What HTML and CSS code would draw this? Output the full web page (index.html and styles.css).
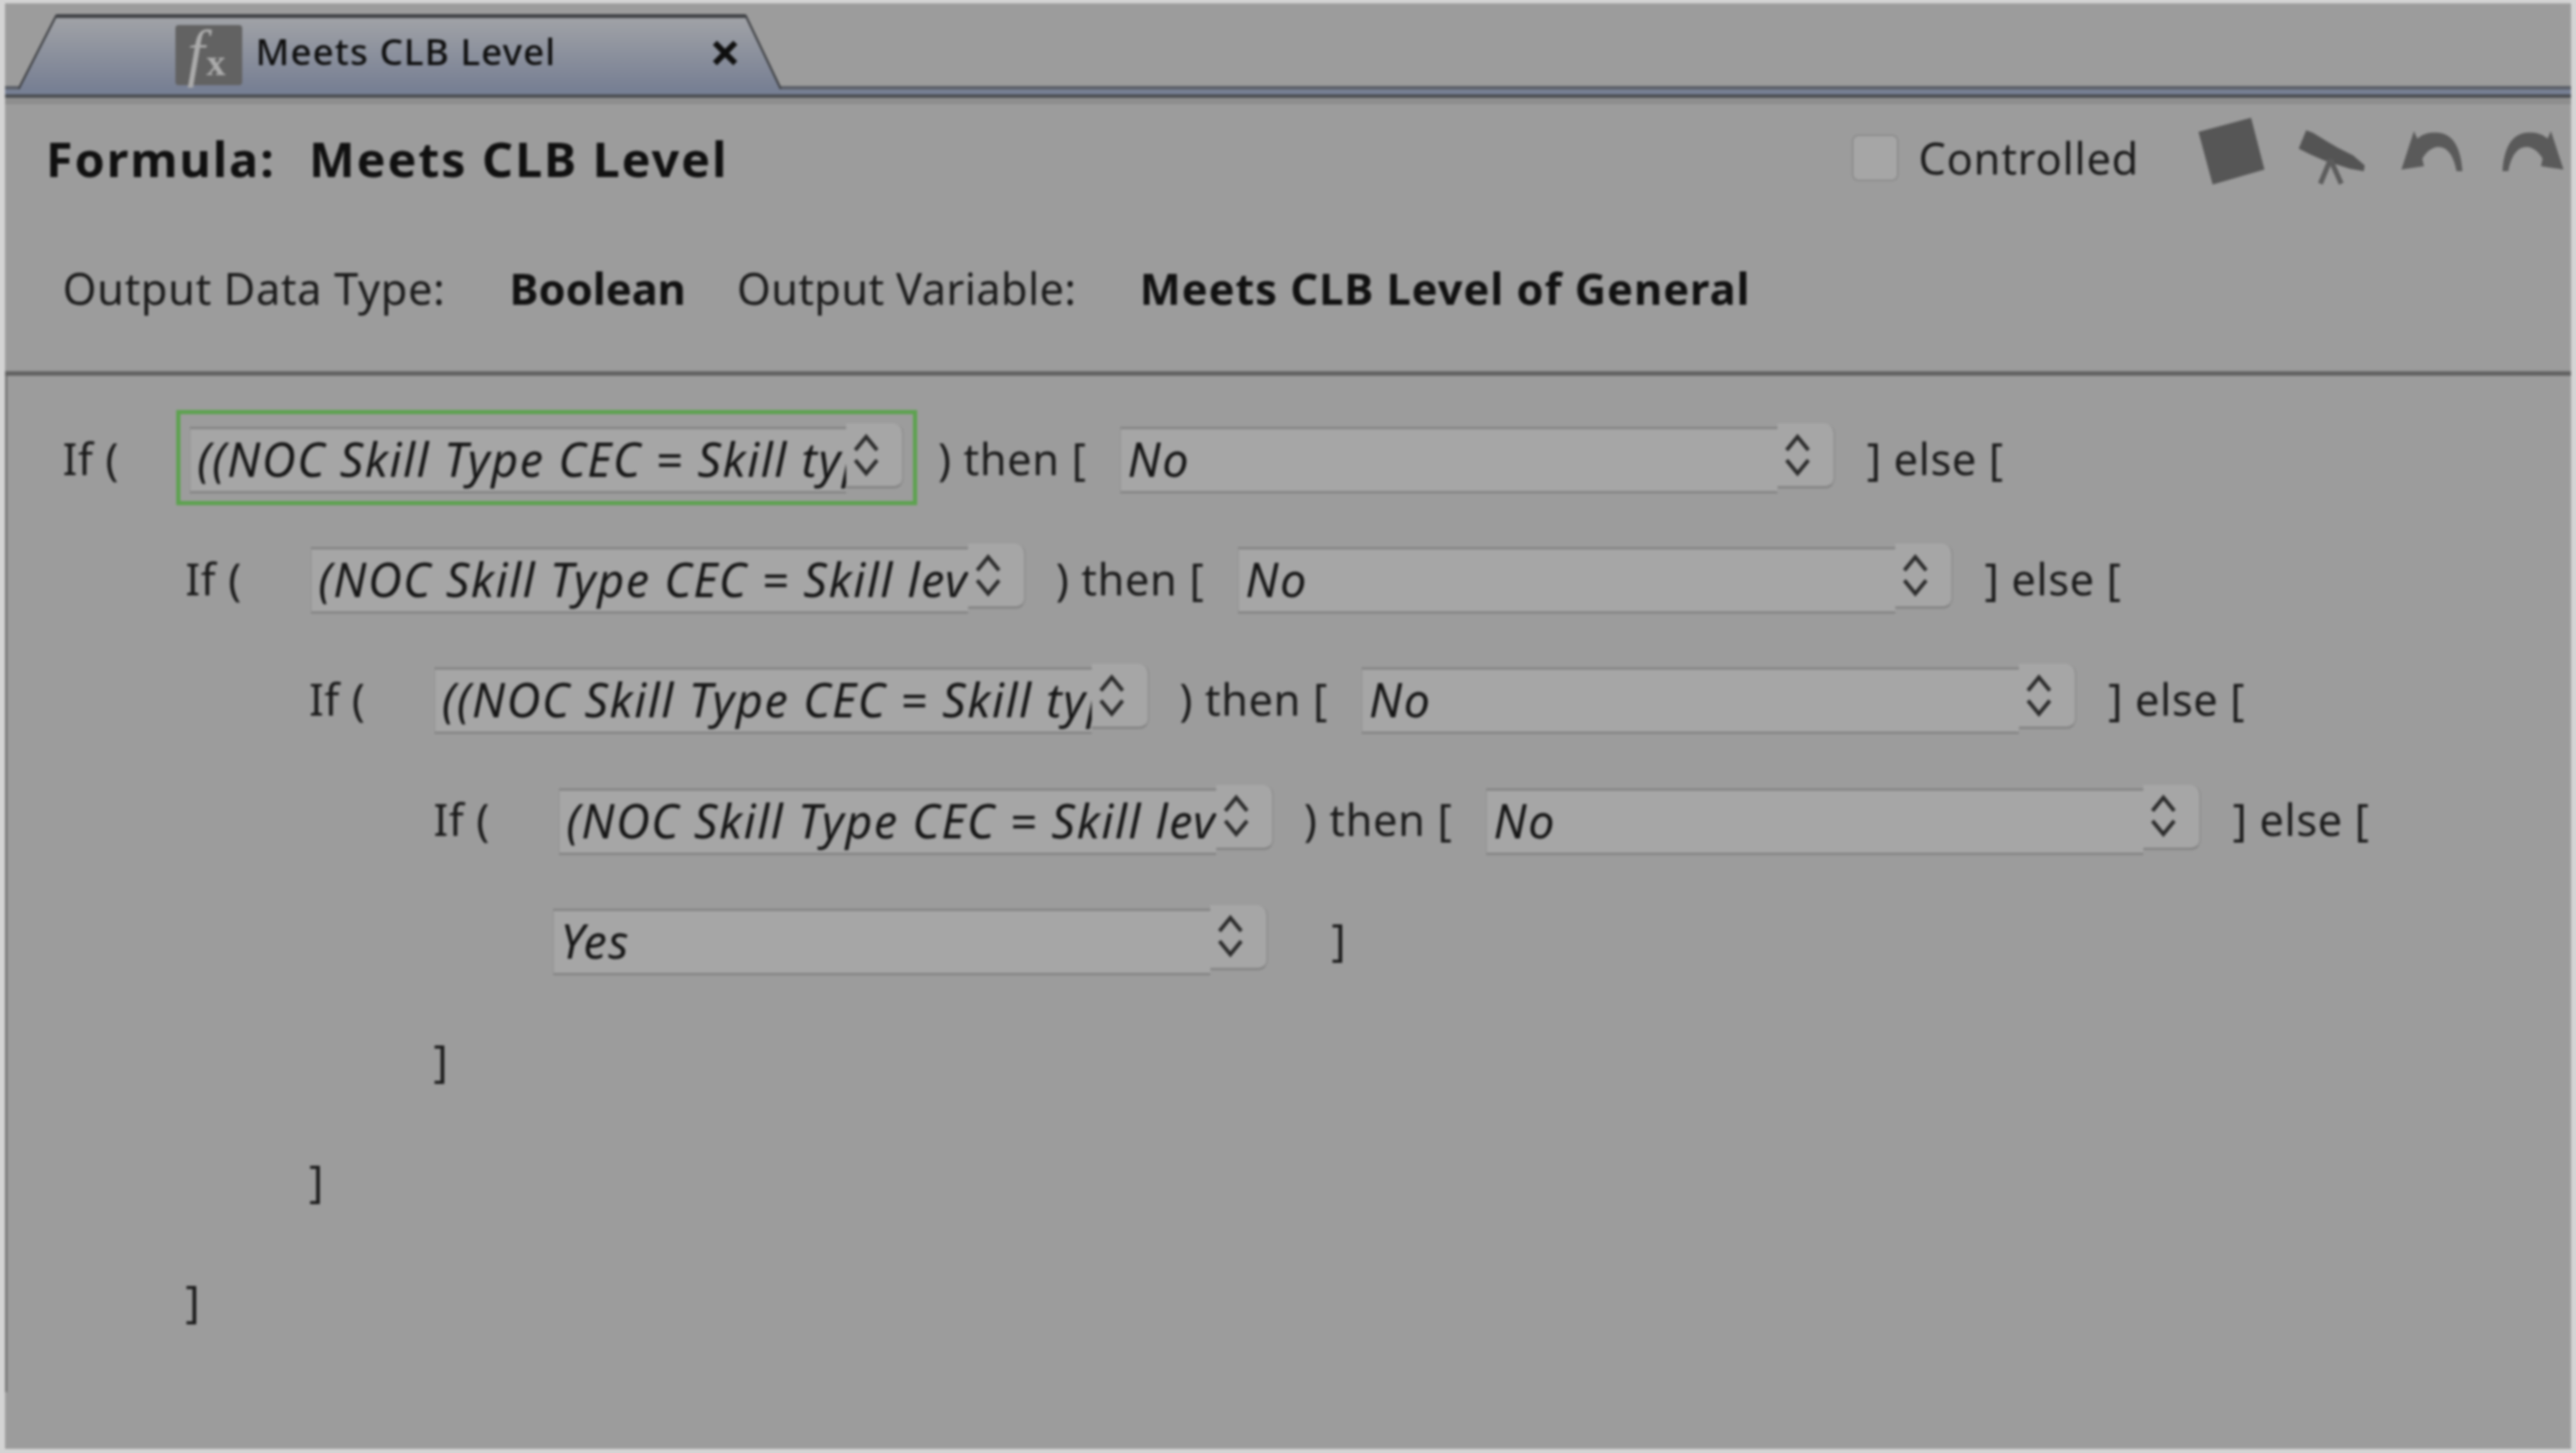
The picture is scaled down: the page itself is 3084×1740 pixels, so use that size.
FILE: index.html
```html
<!DOCTYPE html>
<html lang="en">
<head>
<meta charset="utf-8">
<title>Meets CLB Level</title>
<link rel="stylesheet" href="styles.css">
</head>
<body>
<svg class="defs" width="0" height="0" aria-hidden="true">
  <symbol id="updown" viewBox="0 0 32 52">
    <path d="M3 20 L16 4 L29 20 M3 32 L16 48 L29 32" fill="none" stroke="#2c2c2c" stroke-width="4.5"/>
  </symbol>
</svg>
<main class="window">
  <div class="tabs">
    <div class="tab-gap tab-gap-left"></div>
    <div class="tab">
      <svg class="tab-shape" viewBox="0 0 910 90" preserveAspectRatio="none" aria-hidden="true">
        <defs>
          <linearGradient id="tabfill" x1="0" y1="0" x2="0" y2="1">
            <stop offset="0" stop-color="#a1a3a7"/>
            <stop offset="1" stop-color="#777f93"/>
          </linearGradient>
        </defs>
        <polygon points="0,90 45,2 868,2 910,90" fill="url(#tabfill)"/>
        <polyline points="0,90 45,2 868,2 910,90" fill="none" stroke="#3e4044" stroke-width="2.5"/>
        <line x1="45" y1="2" x2="868" y2="2" stroke="#3e4044" stroke-width="5"/>
      </svg>
      <span class="fx"><i class="fx-f">f</i><span class="fx-x">x</span></span>
      <span class="tab-title">Meets CLB Level</span>
      <span class="tab-close">×</span>
    </div>
    <div class="tab-gap tab-gap-right"></div>
  </div>
  <div class="strip"></div>

  <header class="head">
    <h1 class="title"><span class="title-key">Formula:</span><span>Meets CLB Level</span></h1>
    <div class="tools">
      <span class="check"></span>
      <span class="check-label">Controlled</span>
      <div class="icons">
        <svg class="icon" viewBox="0 0 80 80" aria-hidden="true"><polygon points="0,17 63,0 79,62 17,80" fill="#565656"/></svg>
        <svg class="icon" viewBox="0 0 80 80" aria-hidden="true">
          <path d="M9 15 L0 37 L14 44 L30 51 L61 61 L78 64 L79 57 L65 45 L47 36 L35 29 L17 18 Z" fill="#545454"/>
          <path d="M38 50 L26 79 M38 50 L51 79" fill="none" stroke="#5c5c5c" stroke-width="6"/>
        </svg>
        <svg class="icon" viewBox="0 0 80 80" aria-hidden="true"><path d="M3 62 L18 16 L22 25 C30 18 40 17 48 18 C64 20 74 34 76 64 L69 64 C66 46 58 34 46 35 C38 36 32 42 28 49 L30 58 Z" fill="#5a5a5a"/></svg>
        <svg class="icon" viewBox="0 0 80 80" aria-hidden="true"><path d="M77 62 L62 16 L58 25 C50 18 40 17 32 18 C16 20 6 34 4 64 L11 64 C14 46 22 34 34 35 C42 36 48 42 52 49 L50 58 Z" fill="#5a5a5a"/></svg>
      </div>
    </div>
  </header>

  <div class="meta">
    <span class="meta-label">Output Data Type:</span>
    <b class="meta-type">Boolean</b>
    <span class="meta-var">Output Variable:</span>
    <b class="meta-name">Meets CLB Level of General</b>
  </div>
  <div class="rule"></div>

  <section class="formula">
    <div class="row lvl0">
      <span class="if">If (</span>
      <div class="combo cond focused"><span class="value">((NOC Skill Type CEC = Skill type</span><span class="spin"><svg class="updown"><use href="#updown"/></svg></span></div>
      <span class="then">) then [</span>
      <div class="combo result"><span class="value">No</span><span class="spin"><svg class="updown"><use href="#updown"/></svg></span></div>
      <span class="else">] else [</span>
    </div>
    <div class="row lvl1">
      <span class="if">If (</span>
      <div class="combo cond"><span class="value">(NOC Skill Type CEC = Skill level</span><span class="spin"><svg class="updown"><use href="#updown"/></svg></span></div>
      <span class="then">) then [</span>
      <div class="combo result"><span class="value">No</span><span class="spin"><svg class="updown"><use href="#updown"/></svg></span></div>
      <span class="else">] else [</span>
    </div>
    <div class="row lvl2">
      <span class="if">If (</span>
      <div class="combo cond"><span class="value">((NOC Skill Type CEC = Skill type</span><span class="spin"><svg class="updown"><use href="#updown"/></svg></span></div>
      <span class="then">) then [</span>
      <div class="combo result"><span class="value">No</span><span class="spin"><svg class="updown"><use href="#updown"/></svg></span></div>
      <span class="else">] else [</span>
    </div>
    <div class="row lvl3">
      <span class="if">If (</span>
      <div class="combo cond"><span class="value">(NOC Skill Type CEC = Skill level</span><span class="spin"><svg class="updown"><use href="#updown"/></svg></span></div>
      <span class="then">) then [</span>
      <div class="combo result"><span class="value">No</span><span class="spin"><svg class="updown"><use href="#updown"/></svg></span></div>
      <span class="else">] else [</span>
    </div>
    <div class="row lvl4">
      <div class="combo cond"><span class="value">Yes</span><span class="spin"><svg class="updown"><use href="#updown"/></svg></span></div>
      <span class="close-last">]</span>
    </div>
    <div class="row lvl3"><span>]</span></div>
    <div class="row lvl2"><span>]</span></div>
    <div class="row lvl1"><span>]</span></div>
  </section>
</main>
</body>
</html>
```
FILE: styles.css
```css
html, body {
  margin: 0;
  padding: 0;
  background: #d4d4d4;
}
body {
  width: 3084px;
  height: 1740px;
  overflow: hidden;
  font-family: "Noto Sans", "Open Sans", sans-serif;
  color: #1b1b1b;
}
.defs { position: absolute; }

.window {
  box-sizing: border-box;
  margin: 4px 6px 0 6px;
  height: 1731px;
  padding-top: 13px;
  background: #9c9c9c;
  filter: blur(1.4px);
  display: flex;
  flex-direction: column;
}

/* tab strip */
.tabs {
  display: flex;
  height: 90px;
  align-items: flex-end;
  flex: none;
}
.tab-gap {
  height: 4px;
  background: #5b5f67;
}
.tab-gap-left { width: 16px; }
.tab-gap-right { flex: 1; }
.tab {
  position: relative;
  width: 913px;
  height: 90px;
  flex: none;
  display: flex;
  align-items: center;
  padding-left: 188px;
  box-sizing: border-box;
  color: #0f0f0f;
}
.tab-shape {
  position: absolute;
  inset: 0;
  width: 100%;
  height: 100%;
}
.fx {
  position: relative;
  width: 80px;
  height: 72px;
  margin-top: 8px;
  background: #626262;
  border-radius: 4px;
  flex: none;
  color: #ababab;
  display: flex;
  align-items: center;
  justify-content: center;
}
.fx-f {
  font-family: "Liberation Serif", serif;
  font-size: 76px;
  line-height: 1;
  margin-top: -6px;
  margin-left: -6px;
}
.fx-x {
  font-family: "Liberation Serif", serif;
  font-size: 46px;
  font-weight: 700;
  line-height: 1;
  margin-top: 18px;
  margin-left: 2px;
}
.tab-title {
  position: relative;
  margin-left: 16px;
  font-size: 44px;
  font-weight: 500;
  letter-spacing: 1.3px;
  line-height: 1;
  margin-bottom: 2px;
}
.tab-close {
  position: relative;
  margin-left: auto;
  margin-right: 48px;
  font-size: 66px;
  font-weight: 700;
  line-height: 1;
  margin-bottom: 2px;
}
.strip {
  height: 6px;
  background: #778094;
  border-bottom: 4px solid #4a4d52;
  flex: none;
}

/* header */
.head {
  border-top: 8px solid #8e8e8e;
  height: 136px;
  box-sizing: border-box;
  flex: none;
  display: flex;
  align-items: center;
  justify-content: space-between;
  padding-left: 49px;
  padding-right: 6px;
}
.title {
  margin: 2px 0 0;
  font-size: 58px;
  font-weight: 700;
  line-height: 1;
  letter-spacing: 2.3px;
  color: #101010;
  display: flex;
  gap: 40px;
}
.tools {
  display: flex;
  align-items: center;
}
.check {
  width: 56px;
  height: 56px;
  box-sizing: border-box;
  border: 2px solid #8c8c8c;
  border-radius: 8px;
  background: #a6a6a6;
}
.check-label {
  margin-left: 24px;
  font-size: 52px;
  letter-spacing: 0.9px;
  line-height: 1;
}
.icons {
  margin-left: 71px;
  margin-bottom: 16px;
  display: flex;
  gap: 40px;
}
.icon {
  width: 80px;
  height: 80px;
  display: block;
}

.meta {
  height: 191px;
  flex: none;
  box-sizing: border-box;
  padding-left: 69px;
  padding-bottom: 9px;
  display: flex;
  align-items: center;
  font-size: 52px;
}
.meta b { font-weight: 700; color: #111; }
.meta-label { letter-spacing: 0.7px; }
.meta-type { margin-left: 77px; }
.meta-var { margin-left: 61px; letter-spacing: 0.4px; }
.meta-name { margin-left: 76px; letter-spacing: 1.15px; }

.rule {
  height: 6px;
  flex: none;
  background: #626262;
  border-top: 1px solid #808080;
  box-sizing: border-box;
  box-shadow: 0 -10px 0 -8px #8c8c8c;
}

/* formula */
.formula {
  padding-top: 26px;
  margin-bottom: 68px;
  font-size: 52px;
  letter-spacing: 0.7px;
  flex: 1;
  border-left: 3px solid #787878;
}
.row {
  height: 144.2px;
  display: flex;
  align-items: center;
}
.lvl0 { padding-left: 66px; }
.lvl1 { padding-left: 213px; }
.lvl2 { padding-left: 361px; }
.lvl3 { padding-left: 510px; }
.lvl4 { padding-left: 653px; }
.if { width: 150px; flex: none; }
.then { width: 218px; flex: none; margin-left: 36px; }
.else { margin-left: 38px; }
.close-last { margin-left: 76px; }

.combo {
  display: flex;
  height: 82px;
  box-sizing: border-box;
  flex: none;
}
.cond { width: 856px; }
.result { width: 856px; }
.cond.focused {
  width: 855px;
  outline: 5px solid #5da24f;
  outline-offset: 11px;
  margin-left: 2px;
  margin-right: 5px;
}
.value {
  flex: 1;
  min-width: 0;
  box-sizing: border-box;
  height: 80px;
  margin-top: 4px;
  padding-left: 8px;
  background: #a6a6a6;
  border-top: 3px solid #868686;
  border-bottom: 3px solid #868686;
  border-left: 1px solid #909090;
  font-style: italic;
  font-size: 56px;
  letter-spacing: 1.8px;
  line-height: 70px;
  white-space: nowrap;
  overflow: hidden;
  color: #161616;
}
.spin {
  width: 69px;
  height: 78px;
  flex: none;
  box-sizing: border-box;
  background: #a6a6a6;
  border-radius: 0 12px 12px 0;
  border-bottom: 3px solid #868686;
  border-right: 2px solid #909090;
  display: flex;
  align-items: center;
  padding-left: 8px;
}
.updown {
  width: 32px;
  height: 52px;
  display: block;
}
```
